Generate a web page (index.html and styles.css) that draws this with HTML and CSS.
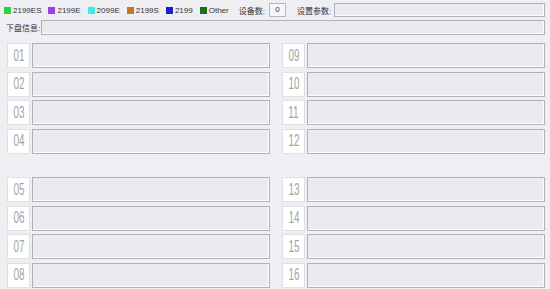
FILE: index.html
```html
<!DOCTYPE html>
<html lang="zh-CN">
<head>
    <meta charset="UTF-8">
    <meta name="viewport" content="width=device-width, initial-scale=1.0">
    <title>下盘信息</title>
    <link rel="stylesheet" href="styles.css">
</head>
<body>
    <div class="top-bar">
        <div class="legend">
            <span class="dot dot-es"></span><span class="legend-text">2199ES</span>
        </div>
        <div class="legend">
            <span class="dot dot-e"></span><span class="legend-text">2199E</span>
        </div>
        <div class="legend">
            <span class="dot dot-2099"></span><span class="legend-text">2099E</span>
        </div>
        <div class="legend">
            <span class="dot dot-s"></span><span class="legend-text">2199S</span>
        </div>
        <div class="legend">
            <span class="dot dot-2199"></span><span class="legend-text">2199</span>
        </div>
        <div class="legend">
            <span class="dot dot-other"></span><span class="legend-text">Other</span>
        </div>
        <span class="label label-count">设备数:</span>
        <div class="count-box">0</div>
        <span class="label label-param">设置参数:</span>
        <div class="field param-box"></div>
    </div>

    <div class="info-bar">
        <span class="label">下盘信息:</span>
        <div class="field info-box"></div>
    </div>

    <div class="slots">
        <div class="slot-col">
            <div class="slot-group">
                <div class="slot"><div class="num"><span>01</span></div><div class="field slot-box"></div></div>
                <div class="slot"><div class="num"><span>02</span></div><div class="field slot-box"></div></div>
                <div class="slot"><div class="num"><span>03</span></div><div class="field slot-box"></div></div>
                <div class="slot"><div class="num"><span>04</span></div><div class="field slot-box"></div></div>
            </div>
            <div class="slot-group">
                <div class="slot"><div class="num"><span>05</span></div><div class="field slot-box"></div></div>
                <div class="slot"><div class="num"><span>06</span></div><div class="field slot-box"></div></div>
                <div class="slot"><div class="num"><span>07</span></div><div class="field slot-box"></div></div>
                <div class="slot"><div class="num"><span>08</span></div><div class="field slot-box"></div></div>
            </div>
        </div>
        <div class="slot-col">
            <div class="slot-group">
                <div class="slot"><div class="num"><span>09</span></div><div class="field slot-box"></div></div>
                <div class="slot"><div class="num"><span>10</span></div><div class="field slot-box"></div></div>
                <div class="slot"><div class="num"><span>11</span></div><div class="field slot-box"></div></div>
                <div class="slot"><div class="num"><span>12</span></div><div class="field slot-box"></div></div>
            </div>
            <div class="slot-group">
                <div class="slot"><div class="num"><span>13</span></div><div class="field slot-box"></div></div>
                <div class="slot"><div class="num"><span>14</span></div><div class="field slot-box"></div></div>
                <div class="slot"><div class="num"><span>15</span></div><div class="field slot-box"></div></div>
                <div class="slot"><div class="num"><span>16</span></div><div class="field slot-box"></div></div>
            </div>
        </div>
    </div>
</body>
</html>
```

FILE: styles.css
```css
body {
    margin: 0;
    padding: 0;
    width: 550px;
    height: 289px;
    overflow: hidden;
    background: #efeef2;
    font-family: "Liberation Sans", "Noto Sans CJK SC", sans-serif;
    font-size: 8px;
    color: #333;
}
.top-bar {
    display: flex;
    align-items: center;
    height: 14px;
    margin-top: 3px;
    padding: 0 5px 0 4px;
}
.legend {
    display: flex;
    align-items: center;
    margin-right: 7px;
}
.dot {
    width: 7px;
    height: 7px;
    margin-right: 2px;
}
.dot-es { background: #2ed33a; }
.dot-e { background: #9a3de8; }
.dot-2099 { background: #3eeaea; }
.dot-s { background: #c8742a; }
.dot-2199 { background: #1a22c8; }
.dot-other { background: #15731d; }
.legend-text {
    white-space: nowrap;
}
.label {
    white-space: nowrap;
    font-size: 8px;
}
.label-count {
    margin-left: 3px;
    margin-right: 4px;
}
.label-param {
    margin-left: 11px;
    margin-right: 3px;
}
.field {
    box-sizing: border-box;
    background: #ebeaee;
    border: 1px solid #b2b1b5;
    box-shadow: inset -1px -1px 0 #fdfdfd;
}
.count-box {
    box-sizing: border-box;
    width: 17px;
    height: 14px;
    border: 1px solid #b8b8b8;
    background: #f6f6f8;
    text-align: center;
    line-height: 12px;
}
.param-box {
    flex: 1;
    height: 14px;
}
.info-bar {
    display: flex;
    align-items: center;
    height: 15px;
    margin-top: 3px;
    padding: 0 5px 0 6px;
}
.info-box {
    flex: 1;
    height: 15px;
    margin-left: 1px;
}
.slots {
    display: grid;
    grid-template-columns: 1fr 1fr;
    column-gap: 12px;
    padding: 8px 5px 0 7px;
}
.slot-col {
    display: flex;
    flex-direction: column;
    gap: 23.5px;
}
.slot-group {
    display: flex;
    flex-direction: column;
    gap: 3.5px;
}
.slot {
    display: flex;
    height: 25px;
    gap: 2px;
}
.num {
    box-sizing: border-box;
    width: 23px;
    background: #fff;
    border: 1px solid #e0dfe3;
    display: flex;
    align-items: center;
    justify-content: center;
    font-family: "Liberation Sans Narrow", "Liberation Sans", sans-serif;
    font-size: 16px;
    color: #a3a3a3;
}
.num span {
    display: inline-block;
    transform: scaleX(0.62);
}
.slot-box {
    flex: 1;
}
```
